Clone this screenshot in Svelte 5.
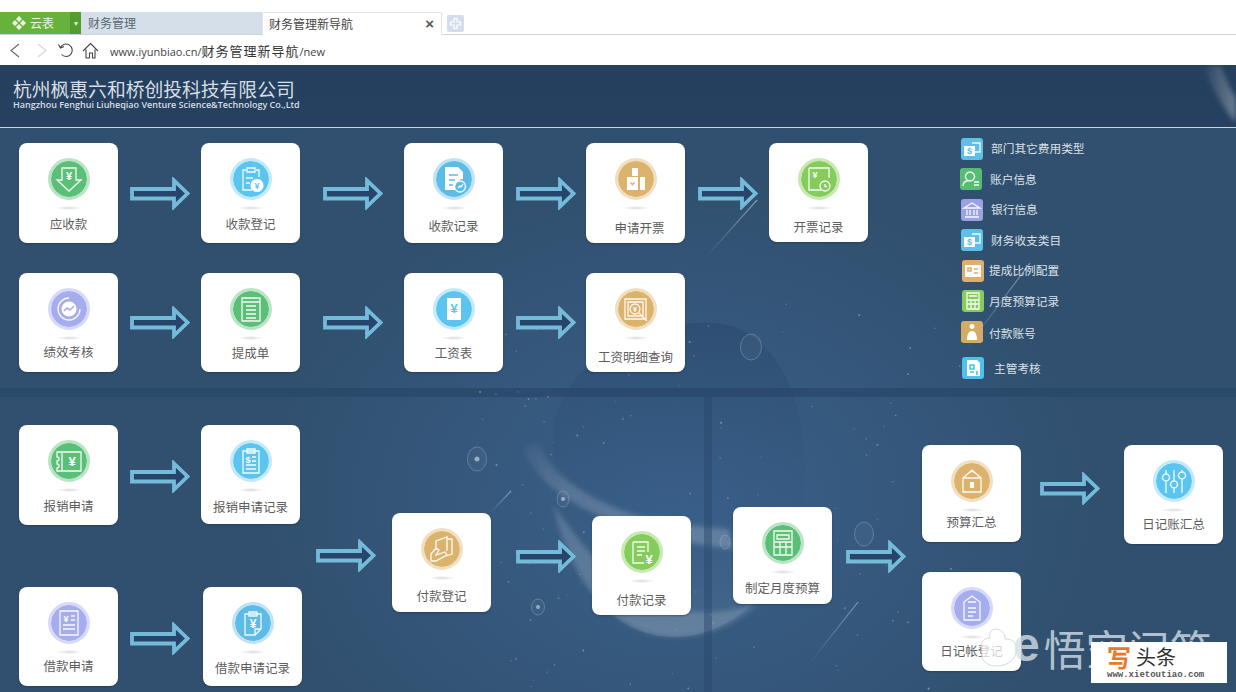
<script>
	const TOP = 65;

	const colors = {
		green: ['#b9e4c5', '#5bbf78'],
		sky: ['#c2ebfa', '#5cc5ef'],
		blue: ['#bfe3f5', '#5dbce6'],
		purple: ['#d6d9f8', '#a6adee'],
		tan: ['#f1dfc2', '#dcb36c'],
		lime: ['#c8e9b2', '#85cc5d']
	};

	// s = white strokes, f = white fill, c = strokes in the disc colour, t = real text
	const icons = {
		down: { s: 'M14 10h14v12h5L21 33 9 22h5z', t: [['¥', 21, 22, 11]] },
		clipCoin: {
			s: 'M16 12h-3v20h9M26 12h3v7M17 10h8v4h-8zM16 20h7M16 25h4',
			f: 'M27 21a6.5 6.5 0 1 0 .01 0z',
			tc: [['¥', 27, 31, 9]]
		},
		docChart: {
			f: 'M12 9h13l5 5v7a9 9 0 0 0-8 11H12z',
			c: 'M16 17h9M16 22h6M16 27h4',
			s: 'M27 23a5.5 5.5 0 1 0 .01 0zM25 30l2-2 1 1 2-3'
		},
		bag: {
			f: 'M12 19h11v13H12zM25 19h5v13h-5zM17 10h6v8h-6z',
			c: 'M15.500 24.500l2 2 2-2',
			s: ''
		},
		invoice: {
			s: 'M11 10h20v10M11 10v22h12M27 23a5 5 0 1 0 .01 0zM27 26v2.500h2',
			t: [['¥', 17, 20, 9]]
		},
		perf: {
			s: 'M21 10a11 11 0 1 0 11 11',
			f: 'M21 13.500a7.500 7.500 0 1 0 .01 0z',
			c: 'M16 23l3-3 3 2 4-4'
		},
		note: { s: 'M12 10h18v23H12zM12 14h18M16 9v2M20 9v2M24 9v2M16 18h10M16 22h10M16 26h10M16 30h10' },
		yenNote: { f: 'M14 10h14v22H14z', tc: [['¥', 21, 25, 13]] },
		magnify: {
			s: 'M10 11h21v20H10zM13 14h15v14H13zM20 16a5 5 0 1 0 .01 0zM24 25l8 8',
			t: [['¥', 20, 24, 7]]
		},
		ticket: {
			s: 'M9 12h24v19H9v-3a2 2 0 0 0 0-4v-3a2 2 0 0 0 0-4zM14 12v19',
			t: [['¥', 24, 26, 13]]
		},
		clipList: {
			s: 'M13 11h16v22H13zM17 9h8v4h-8zM22 17h4M22 21h4M16 25h10M16 29h10',
			t: [['$', 18, 23, 9]]
		},
		yenList: {
			s: 'M12 9h18v24H12zM23 14h4M23 18h4M15 23h12M15 27h12',
			t: [['¥', 18, 20, 9]]
		},
		clipYen: {
			s: 'M13 12h16v15l-6 6H13zM29 27h-6v6M17 10h8v4h-8z',
			t: [['¥', 21, 26, 12]]
		},
		hand: {
			s: 'M15 22V13l11-4v14M26 11h5v15l-6 2M10 33v-7l5-6 3 2-3 5 9-3 2 3-11 6z'
		},
		docYen: {
			s: 'M12 11h15v10M12 11v21h11M16 16h8M16 20h8M16 24h5',
			t: [['¥', 28, 33, 13]]
		},
		calc: { s: 'M12 9h18v24H12zM15 13h12v4H15zM12 20h18M12 25h18M18 20v13M24 20v13' },
		box: {
			s: 'M12 18h18v14H12zM12 18l9-8 9 8M15 15l6-4 6 4',
			f: 'M19 22h4v6h-4z'
		},
		sliders: {
			s: 'M13 10v4M13 21v12M21 10v11M21 28v5M29 10v2M29 19v14M13 14a3.500 3.500 0 1 0 .01 0zM21 21a3.500 3.500 0 1 0 .01 0zM29 12a3.500 3.500 0 1 0 .01 0z'
		},
		clipDoc: {
			s: 'M13 15l8-6 8 6v18H13zM17 15h8M17 21h8M17 25h8M17 29h5'
		},
		cash: {
			s: 'M11 5h8v9h-6',
			f: 'M3 8h11v10H3z',
			tc: [['$', 8.500, 16, 9]]
		},
		user: {
			s: 'M10 4a4.500 4.500 0 1 0 .01 0zM3 18c0-4 3-5.500 7-5.500M14 14h5M14 17h5'
		},
		bank: { s: 'M3 9l8-5 8 5zM4 18h14M6 11v5M9 11v5M13 11v5M16 11v5' },
		idCard: { f: 'M3 5h16v12H3z', c: 'M12 9h4M12 13h4M6 8h3v3H6z' },
		calcS: { s: 'M5 3h12v16H5zM7 6h8M5 10h12M5 14h12M9 10v9M13 10v9' },
		person: {
			f: 'M11 3a2.500 2.500 0 1 0 .01 0zM6 19c0-6 2-9 5-9s5 3 5 9z'
		},
		badge: { f: 'M5 3h10l3 3v13H5z', c: 'M8 8h4v4H8zM8 15h4M15 14v4' }
	};

	const cards = [
		{ name: '应收款', x: 19, y: 143, h: 100, c: 'green', i: 'down', ly: 224 },
		{ name: '收款登记', x: 201, y: 143, h: 100, c: 'sky', i: 'clipCoin', ly: 224 },
		{ name: '收款记录', x: 404, y: 143, h: 100, c: 'blue', i: 'docChart', ly: 226 },
		{ name: '申请开票', x: 586, y: 143, h: 100, c: 'tan', i: 'bag', ly: 228, lx: 4 },
		{ name: '开票记录', x: 769, y: 143, h: 99, c: 'lime', i: 'invoice', ly: 227 },
		{ name: '绩效考核', x: 19, y: 273, h: 99, c: 'purple', i: 'perf', ly: 352 },
		{ name: '提成单', x: 201, y: 273, h: 99, c: 'green', i: 'note', ly: 353 },
		{ name: '工资表', x: 404, y: 273, h: 99, c: 'sky', i: 'yenNote', ly: 353 },
		{ name: '工资明细查询', x: 586, y: 273, h: 99, c: 'tan', i: 'magnify', ly: 357 },
		{ name: '报销申请', x: 19, y: 425, h: 100, c: 'green', i: 'ticket', ly: 506 },
		{ name: '报销申请记录', x: 201, y: 425, h: 99, c: 'sky', i: 'clipList', ly: 507 },
		{ name: '借款申请', x: 19, y: 587, h: 99, c: 'purple', i: 'yenList', ly: 666 },
		{ name: '借款申请记录', x: 203, y: 587, h: 99, c: 'blue', i: 'clipYen', ly: 668 },
		{ name: '付款登记', x: 392, y: 513, h: 99, c: 'tan', i: 'hand', ly: 596 },
		{ name: '付款记录', x: 592, y: 516, h: 99, c: 'lime', i: 'docYen', ly: 600 },
		{ name: '制定月度预算', x: 733, y: 507, h: 97, c: 'green', i: 'calc', ly: 588 },
		{ name: '预算汇总', x: 922, y: 445, h: 97, c: 'tan', i: 'box', ly: 522 },
		{ name: '日记账汇总', x: 1124, y: 445, h: 99, c: 'sky', i: 'sliders', ly: 524 },
		{ name: '日记帐登记', x: 922, y: 572, h: 99, c: 'purple', i: 'clipDoc', ly: 651 }
	];

	const arrows = [
		[130, 177], [323, 177], [516, 177], [698, 177],
		[130, 306], [323, 306], [516, 306],
		[130, 460], [130, 622], [316, 539], [516, 540], [846, 540], [1040, 472]
	];

	const sideItems = [
		{ name: '部门其它费用类型', c: '#5cc0e8', i: 'cash', dx: 1, gap: 8 },
		{ name: '账户信息', c: '#58bd74', i: 'user', dx: 0, gap: 8 },
		{ name: '银行信息', c: '#9aa1e6', i: 'bank', dx: 1, gap: 8 },
		{ name: '财务收支类目', c: '#5cc0e8', i: 'cash', dx: 1, gap: 8 },
		{ name: '提成比例配置', c: '#dfae6b', i: 'idCard', dx: 2, gap: 5 },
		{ name: '月度预算记录', c: '#84cc5e', i: 'calcS', dx: 2, gap: 5 },
		{ name: '付款账号', c: '#d6ab65', i: 'person', dx: 1, gap: 6 },
		{ name: '主管考核', c: '#4cc2ee', i: 'badge', dx: 2, gap: 10 }
	];

	// scattered stars of the background, fixed seed so each render is alike
	let seed = 17;
	const rnd = () => {
		seed = (seed * 16807) % 2147483647;
		return seed / 2147483647;
	};
	const stars = Array.from({ length: 130 }, () => ({
		x: 480 + rnd() * 500,
		y: 300 + rnd() * 390,
		r: 0.5 + rnd() * 0.6,
		o: 0.15 + rnd() * 0.3
	}));

	const rings = [
		{ x: 751, y: 347, rx: 10.5, ry: 13 },
		{ x: 477, y: 459, rx: 9.5, ry: 12, dot: 2.5 },
		{ x: 563, y: 499, rx: 6, ry: 8, dot: 2 },
		{ x: 538, y: 607, rx: 6.5, ry: 8, dot: 2 },
		{ x: 725, y: 542, rx: 5, ry: 7 },
		{ x: 864, y: 534, rx: 9.5, ry: 12 }
	];

	const shoots = [
		[706, 257, 757, 200],
		[490, 513, 511, 491],
		[809, 664, 858, 602],
		[963, 353, 1030, 263]
	];
</script>

{#snippet glyph(ic, bg)}
	{#if ic.f}<path d={ic.f} fill="#fff" />{/if}
	{#if ic.s}<path d={ic.s} fill="none" stroke="#fff" stroke-width="1.3" stroke-opacity="0.92" />{/if}
	{#if ic.c}<path d={ic.c} fill="none" stroke={bg} stroke-width="1.6" />{/if}
	{#each ic.t ?? [] as [ch, x, y, size]}
		<text {x} {y} font-size={size} fill="#fff" class="glyph-text">{ch}</text>
	{/each}
	{#each ic.tc ?? [] as [ch, x, y, size]}
		<text {x} {y} font-size={size} fill={bg} class="glyph-text">{ch}</text>
	{/each}
{/snippet}

<div class="browser">
	<div class="tabs">
		<div class="brand">
			<svg width="16" height="16" viewBox="0 0 16 16">
				<path d="M8 1l3 3-3 3-3-3zM4 5l3 3-3 3-3-3zM12 5l3 3-3 3-3-3zM8 9l3 3-3 3-3-3z" fill="#eef7e8" />
			</svg>
			<span>云表</span>
		</div>
		<div class="brand-drop">▾</div>
		<div class="tab">财务管理</div>
		<div class="tab active">财务管理新导航<span class="close">×</span></div>
		<div class="plus">
			<svg width="13" height="13" viewBox="0 0 13 13">
				<path d="M5 1.500h3v3.500h3.500v3H8v3.500H5V8H1.500V5H5z" fill="none" stroke="#fff" stroke-width="1.200" />
			</svg>
		</div>
	</div>
	<div class="address">
		<svg class="nav" width="100" height="20" viewBox="0 0 100 20">
			<path d="M17 4l-8 6.500 8 6.500" fill="none" stroke="#666" stroke-width="1.100" />
			<path d="M36 4l8 6.500-8 6.500" fill="none" stroke="#d4d4d4" stroke-width="1.100" />
			<path d="M58.500 7.500a6.200 6.200 0 1 1 1 7M56.500 4.500l2 3.500 3.500-1.500" fill="none" stroke="#444" stroke-width="1.100" />
			<path d="M81 11l7.500-7.500L96 11M84 9.500V18h3.500v-5h3v5H93V9.500" fill="none" stroke="#444" stroke-width="1.100" />
		</svg>
		<span class="url">www.iyunbiao.cn/<span class="url-cjk">财务管理新导航</span>/new</span>
	</div>
</div>

<main class="app">
	<header class="header">
		<h1>杭州枫惠六和桥创投科技有限公司</h1>
		<p>Hangzhou Fenghui Liuheqiao Venture Science&amp;Technology Co.,Ltd</p>
	</header>

	<svg class="backdrop" viewBox="0 65 1236 627" width="1236" height="627">
		<defs>
			<linearGradient id="planet" x1="0" y1="0" x2="0" y2="1">
				<stop offset="0" stop-color="#1f3c5c" stop-opacity="0.3" />
				<stop offset="0.6" stop-color="#2d5078" stop-opacity="0.08" />
				<stop offset="1" stop-color="#8fa9c2" stop-opacity="0.2" />
			</linearGradient>
			<linearGradient id="tail" x1="0" y1="0" x2="1" y2="0.4">
				<stop offset="0" stop-color="#fff" stop-opacity="0.03" />
				<stop offset="0.3" stop-color="#fff" stop-opacity="0.16" />
				<stop offset="1" stop-color="#fff" stop-opacity="0.2" />
			</linearGradient>
			<linearGradient id="corner" x1="0" y1="0" x2="1" y2="0">
				<stop offset="0" stop-color="#fff" stop-opacity="0.02" />
				<stop offset="1" stop-color="#fff" stop-opacity="0.32" />
			</linearGradient>
			<linearGradient id="shoot" x1="0" y1="1" x2="1" y2="0">
				<stop offset="0" stop-color="#cfe0ee" stop-opacity="0" />
				<stop offset="1" stop-color="#cfe0ee" stop-opacity="0.5" />
			</linearGradient>
			<filter id="soft" x="-10%" y="-10%" width="120%" height="120%">
				<feGaussianBlur stdDeviation="2.5" />
			</filter>
		</defs>
		<path d="M1203 66c10 25 22 45 33 56V98c-6-8-11-20-15-32z" fill="url(#corner)" filter="url(#soft)" />
		<path d="M553 430c10-70 90-110 160-107 60 3 92 70 92 150 0 90-60 164-130 164-70 0-110-70-122-120z" fill="url(#planet)" />
		<path d="M553 505c10 50 50 132 122 132 35 0 62-14 84-34-60 20-120 8-160-40-20-22-34-42-46-58z" fill="#fff" opacity="0.16" filter="url(#soft)" />
		<path d="M523 447c10 30 40 52 70 66 40 20 90 30 140 36l-4-20c-50-4-90-10-120-24-35-16-60-35-70-60-5 0-12 0-16 2z" fill="url(#tail)" filter="url(#soft)" />
		<rect x="0" y="388" width="1236" height="9" fill="#28486a" opacity="0.75" />
		<rect x="704" y="397" width="8" height="295" fill="#28486a" opacity="0.45" />
		{#each stars as s}
			<circle cx={s.x} cy={s.y} r={s.r} fill="#cfe0ee" opacity={s.o} />
		{/each}
		{#each rings as r}
			<ellipse cx={r.x} cy={r.y} rx={r.rx} ry={r.ry} fill="#fff" fill-opacity="0.04" stroke="#a8c0d4" stroke-opacity="0.35" />
			{#if r.dot}<circle cx={r.x} cy={r.y} r={r.dot} fill="#d5e2ec" opacity="0.6" />{/if}
		{/each}
		{#each shoots as [x1, y1, x2, y2]}
			<path d="M{x1} {y1}L{x2} {y2}" stroke="url(#shoot)" stroke-width="1.200" />
		{/each}
	</svg>

	{#each arrows as [x, y]}
		<svg class="arrow" style="left:{x}px;top:{y - TOP}px" width="60" height="33" viewBox="0 0 60 33">
			<path d="M2 12H44V3.500L57.500 16.500 44 29.500V21.500H2z" fill="#27446a" stroke="#74bbda" stroke-width="3.800" />
		</svg>
	{/each}

	{#each cards as card}
		<a class="card" style="left:{card.x}px;top:{card.y - TOP}px;height:{card.h}px">
			<div class="disc" style="background:{colors[card.c][1]};border-color:{colors[card.c][0]}">
				<svg width="42" height="42" viewBox="0 0 42 42">
					{@render glyph(icons[card.i], colors[card.c][1])}
				</svg>
			</div>
			<div class="shade"></div>
			<span class="label" style="top:{card.ly - card.y - 9}px;left:{card.lx ?? 0}px">{card.name}</span>
		</a>
	{/each}

	<ul class="side">
		{#each sideItems as item}
			<li style="margin-left:{item.dx}px;gap:{item.gap}px">
				<svg class="side-icon" width="22" height="22" viewBox="0 0 22 22" style="background:{item.c}">
					{@render glyph(icons[item.i], item.c)}
				</svg>
				<span>{item.name}</span>
			</li>
		{/each}
	</ul>

	<div class="wukong">
		<svg width="40" height="42" viewBox="0 0 40 42">
			<path d="M12 3c6-3 14 2 13 9 8-1 14 6 11 14-2 8-10 13-20 13C6 39 0 32 2 24c-3-7 2-14 8-13-1-3 0-6 2-8z" fill="#fff" fill-opacity="0.72" stroke="#c2cad2" stroke-opacity="0.7" />
		</svg>
		<span class="wk-e">e</span>
		<span class="wk-text">悟空问答</span>
	</div>
	<div class="stamp">
		<div class="stamp-top"><b>写</b><span>头条</span></div>
		<div class="stamp-url">www.xietoutiao.com</div>
	</div>
</main>

<style>
	:global(body) {
		margin: 0;
		background: #fff;
		font-family: 'Noto Sans CJK SC', 'Liberation Sans', sans-serif;
		overflow: hidden;
	}

	.browser {
		height: 65px;
		padding-top: 12px;
		box-sizing: border-box;
		background: #fff;
	}

	.tabs {
		display: flex;
		height: 23px;
		border-bottom: 1px solid #cfd4da;
		box-sizing: border-box;
		font-size: 12px;
		line-height: 22px;
	}

	.brand {
		width: 70px;
		display: flex;
		align-items: center;
		gap: 3px;
		padding-left: 11px;
		box-sizing: border-box;
		background: #66b23a;
		color: #eaf5e2;
	}

	.brand-drop {
		width: 11px;
		background: #559c2e;
		color: #dcefd0;
		font-size: 8px;
		text-align: center;
	}

	.tab {
		width: 181px;
		padding-left: 7px;
		box-sizing: border-box;
		background: #d5dfe9;
		color: #5b6670;
	}

	.tab.active {
		position: relative;
		width: 180px;
		height: 23px;
		padding-left: 6px;
		background: #fff;
		color: #444;
		border: 1px solid #e0e4e8;
		border-bottom: none;
		border-radius: 2px 2px 0 0;
		line-height: 21px;
	}

	.close {
		position: absolute;
		right: 7px;
		top: 0;
		font-size: 15px;
		font-weight: 700;
		color: #555;
		font-family: 'Liberation Sans', sans-serif;
	}

	.plus {
		display: flex;
		align-items: center;
		justify-content: center;
		width: 17px;
		height: 17px;
		margin: 3px 0 0 5px;
		background: #d3deea;
		border-radius: 2px;
	}

	.address {
		display: flex;
		align-items: center;
		height: 30px;
		padding-left: 2px;
	}

	.nav {
		flex: none;
	}

	.url {
		margin-left: 8px;
		font-family: 'Open Sans', 'Noto Sans CJK SC', sans-serif;
		font-size: 11px;
		color: #444;
		white-space: nowrap;
	}

	.url-cjk {
		font-family: 'Noto Sans CJK SC', sans-serif;
		font-size: 13px;
		letter-spacing: 1px;
		color: #333;
	}

	.app {
		position: relative;
		height: 627px;
		overflow: hidden;
		background:
			radial-gradient(ellipse 420px 330px at 680px 440px, #3a608a, rgba(58, 96, 138, 0)),
			#31506f;
	}

	.header {
		height: 63px;
		padding: 11px 0 0 13px;
		box-sizing: border-box;
		background: linear-gradient(#24405e, #26415f);
		border-bottom: 1px solid #c6d6e2;
		color: #e4e9ee;
	}

	h1 {
		margin: 0;
		font-size: 18.800px;
		font-weight: 400;
		line-height: 26px;
		color: #d6dde4;
	}

	.header p {
		margin: -3px 0 0;
		font-family: 'Open Sans', sans-serif;
		font-size: 9px;
		font-weight: 600;
		line-height: 11px;
		color: #d6dde4;
		white-space: nowrap;
	}

	.backdrop {
		position: absolute;
		left: 0;
		top: 0;
		pointer-events: none;
	}

	.arrow {
		position: absolute;
	}

	.card {
		position: absolute;
		width: 99px;
		box-sizing: border-box;
		padding-top: 15px;
		display: flex;
		flex-direction: column;
		align-items: center;
		background: #fff;
		border-radius: 8px;
		box-shadow: 0 1px 2px rgba(20, 40, 60, 0.4);
	}

	.disc {
		position: relative;
		width: 42px;
		height: 42px;
		box-sizing: border-box;
		border: 3px solid;
		border-radius: 50%;
		background-clip: padding-box !important;
	}

	.disc svg {
		position: absolute;
		left: -3px;
		top: -3px;
	}

	.shade {
		width: 26px;
		height: 4px;
		margin-top: 6px;
		border-radius: 50%;
		background: radial-gradient(closest-side, #d8dadc, rgba(216, 218, 220, 0));
	}

	.label {
		position: absolute;
		width: 100%;
		text-align: center;
		font-size: 12.500px;
		line-height: 18px;
		color: #5e5e5e;
		white-space: nowrap;
	}

	.glyph-text {
		font-family: 'Liberation Sans', sans-serif;
		font-weight: 700;
		text-anchor: middle;
	}

	.side {
		position: absolute;
		left: 960px;
		top: 72.500px;
		margin: 0;
		padding: 0;
		list-style: none;
		display: flex;
		flex-direction: column;
		gap: 8.600px;
	}

	.side li {
		display: flex;
		align-items: center;
		height: 22px;
		font-size: 11.700px;
		color: #d9e0e6;
		white-space: nowrap;
	}

	.side li span {
		margin-top: -2px;
	}

	.side li:nth-child(n + 7) span {
		margin-top: 0;
	}

	.side li:last-child {
		margin-top: 5px;
	}

	.side-icon {
		flex: none;
		border-radius: 3px;
	}

	.wukong {
		position: absolute;
		left: 980px;
		top: 560px;
		height: 46px;
		display: flex;
		align-items: center;
		color: rgba(214, 224, 233, 0.8);
		white-space: nowrap;
	}

	.wk-e {
		margin: -6px 0 0 -7px;
		font-family: 'Liberation Sans', sans-serif;
		font-size: 48px;
		font-weight: 700;
		line-height: 46px;
	}

	.wk-text {
		margin-left: 4px;
		font-size: 42px;
		line-height: 46px;
	}

	.stamp {
		position: absolute;
		left: 1091px;
		top: 577px;
		width: 136px;
		height: 41px;
		box-sizing: border-box;
		padding: 3px 0 0 16px;
		background: #fff;
	}

	.stamp-top {
		display: flex;
		align-items: center;
		gap: 5px;
		height: 24px;
		font-size: 20px;
		line-height: 24px;
		color: #333;
	}

	.stamp-top b {
		color: #e8792b;
		font-size: 24px;
	}

	.stamp-url {
		font-family: 'Liberation Mono', monospace;
		font-size: 9px;
		font-weight: 700;
		line-height: 12px;
		color: #555;
	}
</style>
